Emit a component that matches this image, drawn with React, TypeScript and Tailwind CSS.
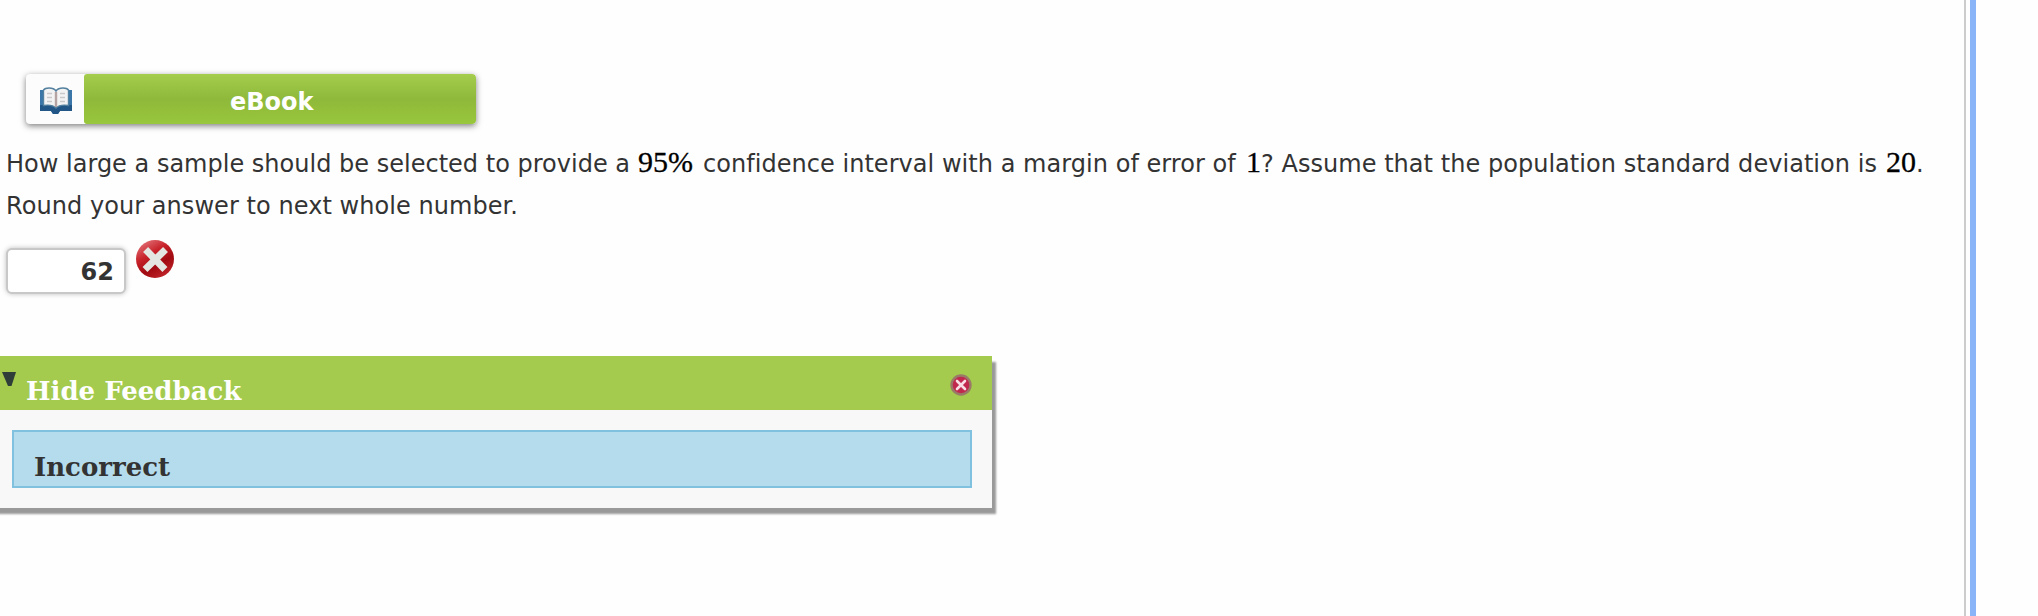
import React from 'react';

const BookIcon: React.FC = () => (
  <svg width="34" height="28" viewBox="0 0 34 28" className="block">
    <path d="M1 3 H33 V24 H21 L19 27 H14 L12 24 H1 Z" fill="#3a76a8" />
    <path d="M1 18 H33 V24 H21 L19 27 H14 L12 24 H1 Z" fill="#215687" />
    <path d="M4.5 3 Q6 1 10 1 Q15 1 17 4 Q19 1 24 1 Q28 1 29.5 3 V18.5 Q21 17 17 21 Q13 17 4.5 18.5 Z" fill="#f4f3f3" stroke="#54809f" strokeWidth="1.4" />
    <path d="M17 5 V20" stroke="#b5a3a3" strokeWidth="2.4" />
    <path d="M8 6.5 H13 M8 10.5 H13 M8 14.5 H13 M21 6.5 H26 M21 10.5 H26 M21 14.5 H26" stroke="#c9c9cd" strokeWidth="1.6" />
  </svg>
);

const WrongIcon: React.FC = () => (
  <svg width="38" height="38" viewBox="0 0 38 38" className="block">
    <defs>
      <linearGradient id="wrong" x1="0.2" y1="0" x2="0.8" y2="1">
        <stop offset="0" stopColor="#e27378" />
        <stop offset="0.35" stopColor="#c8222a" />
        <stop offset="0.65" stopColor="#a00a10" />
        <stop offset="1" stopColor="#c4282d" />
      </linearGradient>
    </defs>
    <circle cx="19" cy="19" r="19" fill="url(#wrong)" />
    <path d="M12 12 L26.5 27 M27 12 L11.5 27" stroke="#e3e6e1" strokeWidth="7" strokeLinecap="square" />
  </svg>
);

const CloseIcon: React.FC = () => (
  <svg width="22" height="22" viewBox="0 0 22 22" className="block">
    <circle cx="11" cy="11" r="9.5" fill="#c0284d" stroke="#9a7a66" strokeWidth="2.4" />
    <path d="M7 7 L15 15 M15 7 L7 15" stroke="#f8dfe5" strokeWidth="2.6" strokeLinecap="round" />
  </svg>
);

const MathText: React.FC<{ children: string }> = ({ children }) => (
  <span className="font-['Liberation_Serif',serif] text-[30px] leading-none tracking-normal text-black [-webkit-text-stroke:0.3px_black]">{children}</span>
);

const App: React.FC = () => {
  return (
    <div className="flex h-[616px] w-[2038px] overflow-hidden bg-[#fefefe] font-['DejaVu_Sans',sans-serif] text-[24px] text-[#333]">
      <main className="w-[1964px] pt-[74px]">
        <button className="ml-[26px] flex h-[50px] w-[450px] overflow-hidden rounded-[4px] bg-[#fcfcfc] shadow-[0_2px_6px_rgba(0,0,0,0.5)]">
          <span className="flex h-full w-[58px] items-center pl-[13px] pt-[3px]">
            <BookIcon />
          </span>
          <span className="flex h-full w-[392px] items-center rounded-[3px] bg-linear-to-b from-[#a4cd4d] via-[#8fb93a] to-[#98c63c] pl-[146px] pt-[5px] font-bold text-white">
            eBook
          </span>
        </button>

        <div className="ml-[6px] mt-[19px] h-[84px] leading-[42px] tracking-[0.04px]">
          <p className="flex h-[42px] items-baseline whitespace-nowrap">
            <span className="w-[632px] tracking-[0.01px]">How large a sample should be selected to provide a</span>
            <span className="w-[65px]"><MathText>95%</MathText></span>
            <span className="w-[543px]">confidence interval with a margin of error of</span>
            <span className="w-[15px]"><MathText>1</MathText></span>
            <span className="w-[625px]">? Assume that the population standard deviation is</span>
            <MathText>20</MathText>
            <span>.</span>
          </p>
          <p className="tracking-[0.06px]">Round your answer to next whole number.</p>
        </div>

        <div className="mt-[13px] flex h-[54px] items-start pl-[6px]">
          <div className="mt-[8px] flex h-[46px] w-[120px] items-center justify-end rounded-[6px] border-2 border-[#c8c8c8] bg-white pr-[10px] pt-[2px] font-bold shadow-[0_0_5px_rgba(0,0,0,0.25)]">
            62
          </div>
          <div className="ml-[10px]">
            <WrongIcon />
          </div>
        </div>

        <section className="-ml-[12px] mt-[62px] h-[152px] w-[1004px] bg-[#f8f8f8] font-['DejaVu_Serif',serif] font-bold shadow-[4px_6px_2px_#999]">
          <header className="flex h-[54px] items-start bg-[#a4cb4e] pl-[14px] text-white">
            <svg width="14" height="14" viewBox="0 0 14 14" className="mt-[16px]">
              <path d="M0 0 H14 L9.5 14 H6 Z" fill="#2f3e39" />
            </svg>
            <h2 className="ml-[10px] mt-[17px] w-[924px] text-[26px] leading-[36px]">Hide Feedback</h2>
            <div className="mt-[18px]">
              <CloseIcon />
            </div>
          </header>
          <div className="ml-[24px] mt-[20px] h-[58px] w-[960px] border-2 border-[#80c1df] bg-[#b5dcec] pl-[20px] pt-[17px]">
            <h3 className="text-[26px] leading-[36px]">Incorrect</h3>
          </div>
        </section>
      </main>
      <div className="h-full w-[2px] bg-[#ccc]" />
      <div className="ml-[4px] h-full w-[6px] bg-[#8ab4f8]" />
    </div>
  );
};

export default App;
